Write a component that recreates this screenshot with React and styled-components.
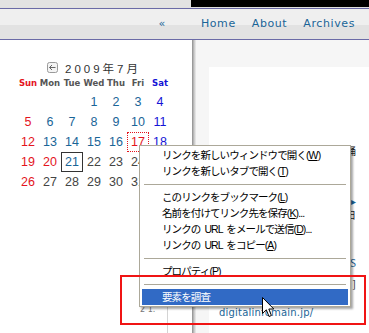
import React from 'react';
import styled, { createGlobalStyle } from 'styled-components';

const GlobalStyle = createGlobalStyle`
  html, body {
    margin: 0;
    padding: 0;
    background: #ffffff;
  }
`

const Page = styled.div`
  position: relative;
  width: 369px;
  height: 333px;
  overflow: hidden;
  background: #ffffff;
  font-family: "DejaVu Sans", sans-serif;
`

const TopStrip = styled.div`
  display: flex;
  height: 7px;
  border-bottom: 1px solid #e0e0e0;
`

const StripPart = styled.div`
  width: ${p => p.$w || 'auto'};
  flex: ${p => (p.$w ? 'none' : 1)};
  background: ${p => p.$bg};
`

const Header = styled.header`
  display: flex;
  align-items: center;
  justify-content: flex-end;
  height: 30px;
  padding-right: 14px;
  border-top: 1px solid #6a6aa6;
  border-bottom: 1px solid #6a6aa6;
  background: linear-gradient(to bottom, #efefef 0, #efefef 16px, #e2e2e2 16px, #e2e2e2 100%);
`

const NavLink = styled.a`
  font-family: "DejaVu Sans", sans-serif;
  font-size: 11px;
  letter-spacing: 0.6px;
  color: #1a6597;
  text-decoration: none;
  margin-left: ${p => p.$gap}px;
  padding-bottom: 2px;
`

const Body = styled.div`
  display: flex;
  height: 293px;
`

const Sidebar = styled.aside`
  width: 192px;
  flex: none;
  padding: 20px 0 0 17px;
  box-sizing: border-box;
  background: #ffffff;
`

const Shade = styled.div`
  width: 4px;
  flex: none;
  background: linear-gradient(to right, #8c8c8c, #c4c4c4 50%, #eeeeee);
`

const Main = styled.main`
  flex: 1;
  background: #f6f6f6;
  padding: 27px 0 0 13px;
`

const Card = styled.div`
  height: 100%;
  background: #ffffff;
  padding: 0 13px 0 10px;
  display: flex;
  flex-direction: column;
  overflow: hidden;
`

const CardLine = styled.div`
  margin-top: ${p => p.$mt}px;
  height: 12px;
  line-height: 12px;
  font-family: "Noto Sans CJK JP", sans-serif;
  font-size: 10px;
  color: ${p => p.$color};
  white-space: nowrap;
  text-align: right;
`

const UrlLine = styled.div`
  margin-top: ${p => p.$mt}px;
  font-family: "DejaVu Sans", sans-serif;
  font-size: 10px;
  letter-spacing: 0.2px;
  color: #1a6597;
`

const Calendar = styled.div`
  width: 154px;
`

const Caption = styled.div`
  display: flex;
  align-items: center;
  justify-content: center;
  gap: 7px;
  height: 15px;
`

const CaptionText = styled.span`
  font-family: "Liberation Sans", "Noto Sans CJK JP", sans-serif;
  font-size: 11.5px;
  letter-spacing: 3px;
  color: #333333;
`

const Grid = styled.div`
  display: grid;
  grid-template-columns: repeat(7, 22px);
`

const HeadCell = styled.div`
  height: 15px;
  margin-bottom: 2px;
  display: flex;
  align-items: center;
  justify-content: center;
  font-family: "DejaVu Sans", sans-serif;
  font-weight: bold;
  font-size: 8.5px;
  color: ${p => p.$color};
`

const DayCell = styled.div`
  height: 20px;
  display: flex;
  align-items: center;
  justify-content: center;
  box-sizing: border-box;
  font-family: "Liberation Sans", sans-serif;
  font-size: 12.5px;
  color: ${p => p.$color};
  border: ${p => (p.$today ? '1px solid #333333' : p.$focus ? '1px dotted #e4141d' : '1px solid transparent')};
`

const SideFoot = styled.div`
  display: flex;
  align-items: flex-start;
  margin-top: 108px;
  padding-left: 123px;
  gap: 12px;
`

const FootText = styled.span`
  font-family: "DejaVu Sans", sans-serif;
  font-size: 8px;
  color: #777777;
  padding-top: 5px;
`

const FootRule = styled.div`
  width: 1px;
  height: 40px;
  background: #d4d4d4;
`

const Menu = styled.div`
  position: absolute;
  left: 139px;
  top: 145px;
  width: 212px;
  box-sizing: border-box;
  padding: 1px 2px 1px;
  background: #ffffff;
  border: 1px solid #aca899;
  box-shadow: 2px 2px 2px rgba(0, 0, 0, 0.35);
  z-index: 2;
`

const MenuItem = styled.div`
  height: 16px;
  line-height: 16px;
  padding-left: 20px;
  font-family: "Liberation Sans", "Noto Sans CJK JP", sans-serif;
  font-size: 10.5px;
  letter-spacing: -0.9px;
  word-spacing: 2px;
  white-space: nowrap;
  color: ${p => (p.$active ? '#ffffff' : '#000000')};
  background: ${p => (p.$active ? '#316ac5' : 'transparent')};

  u {
    text-decoration: underline;
    text-underline-offset: 1px;
  }
`

const Separator = styled.div`
  height: 10px;
  display: flex;
  align-items: center;
  padding: 0 2px;

  &::after {
    content: '';
    flex: 1;
    height: 1px;
    background: #aca899;
  }
`

const Callout = styled.div`
  position: absolute;
  left: 120px;
  top: 275px;
  width: 246px;
  height: 50px;
  box-sizing: border-box;
  border: 2px solid #f01414;
  z-index: 3;
`

const Pointer = styled.svg`
  position: absolute;
  left: 262px;
  top: 297px;
  z-index: 4;
`

const BackIcon = () => (
  <svg width="11" height="11" viewBox="0 0 11 11">
    <rect x="0.5" y="0.5" width="10" height="10" rx="2" fill="#f4f4f4" stroke="#9a9a9a" />
    <path d="M2.5 5.5 H8.5 M2.5 5.5 L5 3 M2.5 5.5 L5 8" stroke="#666" strokeWidth="1" fill="none" />
  </svg>
)

const RED = '#e4141d'
const BLUE = '#1414d6'
const LINK = '#1a6597'
const PLAIN = '#444444'

const heads = [
  ['Sun', RED], ['Mon', '#555'], ['Tue', '#555'], ['Wed', '#555'],
  ['Thu', '#555'], ['Fri', '#555'], ['Sat', BLUE],
]

const dayColor = (d, col) => {
  if (col === 0 || d === 17 || d === 20) return RED
  if (col === 6) return BLUE
  if (d <= 21) return LINK
  return PLAIN
}

const menuItems = [
  { label: 'リンクを新しいウィンドウで開く', key: 'W' },
  { label: 'リンクを新しいタブで開く', key: 'T' },
  { sep: true },
  { label: 'このリンクをブックマーク', key: 'L' },
  { label: '名前を付けてリンク先を保存', key: 'K', tail: '...' },
  { label: 'リンクの URL をメールで送信', key: 'D', tail: '...' },
  { label: 'リンクの URL をコピー', key: 'A' },
  { sep: true },
  { label: 'プロパティ', key: 'P' },
  { sep: true },
  { label: '要素を調査', active: true },
]

const App = () => {
  const cells = []
  for (let i = 0; i < 3; i++) cells.push(<DayCell key={'e' + i} />)
  for (let d = 1; d <= 31; d++) {
    const col = (d + 2) % 7
    cells.push(
      <DayCell key={d} $color={dayColor(d, col)} $today={d === 21} $focus={d === 17}>
        {d}
      </DayCell>
    )
  }

  return (
    <Page>
      <GlobalStyle />
      <TopStrip>
        <StripPart $w="191px" $bg="#e2e2e2" />
        <StripPart $bg="#000000" />
      </TopStrip>
      <Header>
        <NavLink $gap={0}>«</NavLink>
        <NavLink $gap={35}>Home</NavLink>
        <NavLink $gap={16}>About</NavLink>
        <NavLink $gap={16}>Archives</NavLink>
      </Header>
      <Body>
        <Sidebar>
          <Calendar>
            <Caption>
              <BackIcon />
              <CaptionText>2009年7月</CaptionText>
            </Caption>
            <Grid>
              {heads.map(([h, c]) => (
                <HeadCell key={h} $color={c}>{h}</HeadCell>
              ))}
              {cells}
            </Grid>
          </Calendar>
          <SideFoot>
            <FootText>2 1.</FootText>
            <FootRule />
          </SideFoot>
        </Sidebar>
        <Shade />
        <Main>
          <Card>
            <CardLine $mt={78} $color="#222">誦</CardLine>
            <CardLine $mt={38} $color={LINK}>▸</CardLine>
            <CardLine $mt={2} $color="#222">日</CardLine>
            <CardLine $mt={36} $color={LINK}>S</CardLine>
            <CardLine $mt={9} $color="#222">]</CardLine>
            <UrlLine $mt={17}>digitalinfomain.jp/</UrlLine>
          </Card>
        </Main>
      </Body>

      <Menu>
        {menuItems.map((item, i) =>
          item.sep ? (
            <Separator key={i} />
          ) : (
            <MenuItem key={i} $active={item.active}>
              {item.label}
              {item.key && (
                <>
                  (<u>{item.key}</u>)
                </>
              )}
              {item.tail}
            </MenuItem>
          )
        )}
      </Menu>

      <Callout />

      <Pointer width="13" height="21" viewBox="0 0 13 21">
        <path
          d="M0.5 0.5 L0.5 16.5 L4.3 12.8 L7 19.5 L9.4 18.5 L6.8 12 L11.8 12 Z"
          fill="#ffffff"
          stroke="#000000"
          strokeWidth="1"
        />
      </Pointer>
    </Page>
  );
};

export default App;
